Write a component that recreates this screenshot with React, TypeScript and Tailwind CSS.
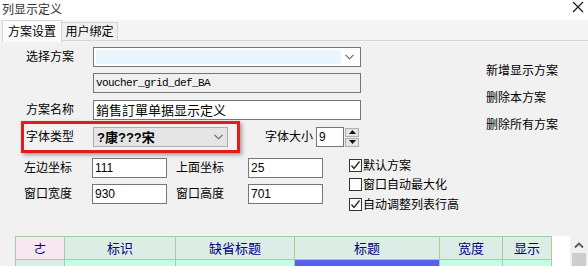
import React from "react";

function Chevron({ className = "" }: { className?: string }) {
  return (
    <svg width="9" height="6" viewBox="0 0 9 6" className={className}>
      <path d="M0.5 0.8 L4.5 4.8 L8.5 0.8" fill="none" stroke="#606060" strokeWidth="1.1" />
    </svg>
  );
}

function Check({ checked }: { checked: boolean }) {
  return (
    <div className="w-[13px] h-[13px] border border-[#333] bg-white flex items-center justify-center">
      {checked && (
        <svg width="11" height="11" viewBox="0 0 11 11">
          <path d="M1.5 5.5 L4 8.5 L9.5 1.5" fill="none" stroke="#222" strokeWidth="1.3" />
        </svg>
      )}
    </div>
  );
}

export default function App() {
  return (
    <div className="w-[588px] h-[266px] overflow-hidden bg-[#f0f1f0] text-[12px] leading-none text-black font-['Liberation_Sans','Noto_Sans_CJK_SC',sans-serif]">
      {/* title bar */}
      <div className="h-[20px] bg-white flex items-center justify-between pl-[2px] pr-[4px]">
        <span className="text-[12px] text-[#333] mt-[-1px]">列显示定义</span>
        <svg width="12" height="12" viewBox="0 0 12 12" className="mt-[-6px]">
          <path d="M1 1 L11 11 M11 1 L1 11" stroke="#111" strokeWidth="1.1" />
        </svg>
      </div>
      {/* tabs */}
      <div className="h-[22px] bg-[#f4f4f4] flex items-start pl-[2px]">
        <div className="h-[22px] w-[60px] bg-[#fbfbfb] border border-b-0 border-[#d5d5d5] flex items-center justify-center relative z-10">
          <span className="mt-[1px]">方案设置</span>
        </div>
        <div className="mt-[2px] h-[19px] w-[56px] bg-[#f0f0f0] border border-l-0 border-[#d5d5d5] flex items-center justify-center">
          <span>用户绑定</span>
        </div>
        <div className="flex-1 h-[21px] border-b border-[#d5d5d5]"></div>
      </div>
      {/* content */}
      <div className="h-[224px] flex flex-col">
        <div className="h-[194px] flex">
          <div className="w-[470px] pt-[5px] flex flex-col">
            {/* row 1 */}
            <div className="h-[20px] flex items-center">
              <div className="w-[93px] pl-[26px]">选择方案</div>
              <div className="w-[268px] h-[20px] border border-[#767676] bg-white p-[2px] flex items-stretch">
                <div className="flex-1 bg-[#e8f7fd]"></div>
                <div className="w-[17px] flex items-center justify-center">
                  <Chevron />
                </div>
              </div>
            </div>
            {/* row 2 */}
            <div className="h-[20px] mt-[6px] flex items-center">
              <div className="w-[93px]"></div>
              <div className="w-[268px] h-[20px] border border-[#767676] bg-[#f0f0f0] flex items-center pl-[2px] font-['Liberation_Mono',monospace] text-[11px] tracking-[-0.6px]">
                voucher_grid_def_BA
              </div>
            </div>
            {/* row 3 */}
            <div className="h-[20px] mt-[7px] flex items-center">
              <div className="w-[93px] pl-[26px]">方案名称</div>
              <div className="w-[268px] h-[20px] border border-[#767676] bg-white flex items-center pl-[2px] text-[13px]">
                銷售訂單单据显示定义
              </div>
            </div>
            {/* row 4 */}
            <div className="h-[32px] mt-[1px] flex items-center">
              <div className="ml-[21px] w-[219px] h-[32px] border-[3px] border-[#e41b1b] shadow-[2px_2px_4px_rgba(0,0,0,0.35)] flex items-center">
                <div className="w-[69px] pl-[2px]">字体类型</div>
                <div className="w-[135px] h-[20px] border border-[#adadad] bg-[#e5e5e5] flex items-center justify-between pl-[3px] pr-[4px]">
                  <span className="font-bold text-[13px]">?康???宋</span>
                  <Chevron />
                </div>
              </div>
              <div className="ml-[25px] w-[51px]">字体大小</div>
              <div className="w-[28px] h-[20px] border border-[#767676] bg-white flex items-center pl-[2px]">9</div>
              <div className="ml-[1px] w-[14px] h-[19px] flex flex-col">
                <div className="h-[9px] border border-[#adadad] bg-[#e5e5e5] flex items-center justify-center">
                  <svg width="7" height="4" viewBox="0 0 7 4"><path d="M0 4 L3.5 0 L7 4 Z" fill="#111" /></svg>
                </div>
                <div className="h-[9px] mt-[1px] border border-[#adadad] bg-[#e5e5e5] flex items-center justify-center">
                  <svg width="7" height="4" viewBox="0 0 7 4"><path d="M0 0 L3.5 4 L7 0 Z" fill="#111" /></svg>
                </div>
              </div>
            </div>
            {/* rows 5-6 + checkboxes */}
            <div className="mt-[5px] flex">
              <div className="w-[323px] flex flex-col">
                <div className="h-[20px] flex items-center">
                  <div className="w-[92px] pl-[24px]">左边坐标</div>
                  <div className="w-[75px] h-[20px] border border-[#767676] bg-white flex items-center pl-[2px]">111</div>
                  <div className="ml-[9px] w-[72px]">上面坐标</div>
                  <div className="w-[75px] h-[20px] border border-[#767676] bg-white flex items-center pl-[2px]">25</div>
                </div>
                <div className="h-[20px] mt-[6px] flex items-center">
                  <div className="w-[92px] pl-[24px]">窗口宽度</div>
                  <div className="w-[75px] h-[20px] border border-[#767676] bg-white flex items-center pl-[2px]">930</div>
                  <div className="ml-[9px] w-[72px]">窗口高度</div>
                  <div className="w-[75px] h-[20px] border border-[#767676] bg-white flex items-center pl-[2px]">701</div>
                </div>
              </div>
              <div className="ml-[26px] pt-[1px] flex flex-col">
                <div className="h-[13px] flex items-center">
                  <Check checked />
                  <span className="ml-[1px]">默认方案</span>
                </div>
                <div className="h-[13px] mt-[6px] flex items-center">
                  <Check checked={false} />
                  <span className="ml-[1px]">窗口自动最大化</span>
                </div>
                <div className="h-[13px] mt-[7px] flex items-center">
                  <Check checked />
                  <span className="ml-[1px]">自动调整列表行高</span>
                </div>
              </div>
            </div>
          </div>
          {/* right actions */}
          <div className="pt-[21px] pl-[16px] flex flex-col">
            <div className="h-[16px] flex items-center">新增显示方案</div>
            <div className="h-[16px] mt-[11px] flex items-center">删除本方案</div>
            <div className="h-[16px] mt-[11px] flex items-center">删除所有方案</div>
          </div>
        </div>
        {/* table */}
        <div className="h-[30px] flex pl-[15px]">
          <div className="flex flex-col">
            <div className="grid grid-cols-[49px_111px_119px_145px_63px_49px] h-[24px] border-t border-l border-[#a2cea2] text-[#000080] text-[13px]">
              <div className="bg-[#f8e6f1] border-r border-b border-[#a2cea2] flex items-center justify-center">ㄜ</div>
              <div className="bg-[#dcede6] border-r border-b border-[#a2cea2] flex items-center justify-center">标识</div>
              <div className="bg-[#dcede6] border-r border-b border-[#a2cea2] flex items-center justify-center">缺省标题</div>
              <div className="bg-[#dcede6] border-r border-b border-[#a2cea2] flex items-center justify-center">标题</div>
              <div className="bg-[#dcede6] border-r border-b border-[#a2cea2] flex items-center justify-center">宽度</div>
              <div className="bg-[#dcede6] border-r border-b border-[#a2cea2] flex items-center justify-center">显示</div>
            </div>
            <div className="grid grid-cols-[49px_111px_119px_145px_63px_49px] h-[6px] border-l border-[#a2cea2]">
              <div className="bg-[#dcede6] border-r border-[#a2cea2]"></div>
              <div className="bg-[#c2fee0] border-r border-[#a2cea2]"></div>
              <div className="bg-[#c2fee0] border-r border-[#a2cea2]"></div>
              <div className="bg-[#5860f0] border-r border-[#a2cea2]"></div>
              <div className="bg-[#c2fee0] border-r border-[#a2cea2]"></div>
              <div className="bg-[#c2fee0] border-r border-[#a2cea2]"></div>
            </div>
          </div>
          <div className="w-[19px] bg-white"></div>
          <div className="w-[18px] bg-[#f0f0f0] flex flex-col items-center">
            <div className="h-[17px] flex items-center justify-center">
              <svg width="10" height="6" viewBox="0 0 10 6"><path d="M1 5.5 L5 1.5 L9 5.5" fill="none" stroke="#555" strokeWidth="1.8" /></svg>
            </div>
            <div className="w-[14px] flex-1 bg-[#cdcdcd]"></div>
          </div>
        </div>
      </div>
    </div>
  );
}
